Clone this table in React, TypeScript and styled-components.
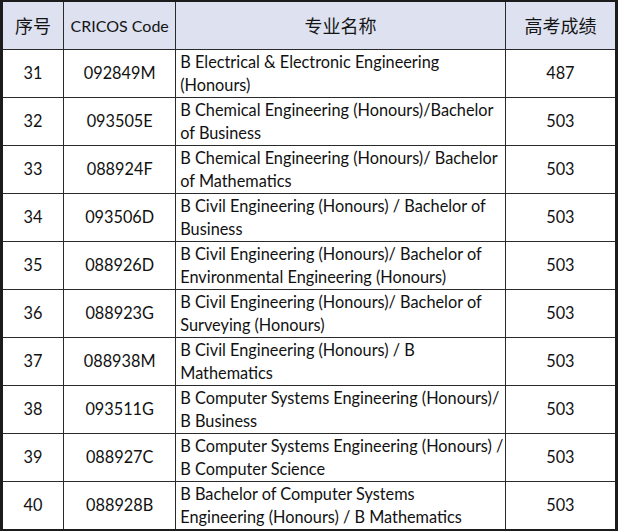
import React from 'react';
import styled, { createGlobalStyle } from 'styled-components';

type Row = {
  no: number;
  code: string;
  name: [string, string];
  score: number;
};

const rows: Row[] = [
  { no: 31, code: '092849M', name: ['B Electrical & Electronic Engineering', '(Honours)'], score: 487 },
  { no: 32, code: '093505E', name: ['B Chemical Engineering (Honours)/Bachelor', 'of Business'], score: 503 },
  { no: 33, code: '088924F', name: ['B Chemical Engineering (Honours)/ Bachelor', 'of Mathematics'], score: 503 },
  { no: 34, code: '093506D', name: ['B Civil Engineering (Honours) / Bachelor of', 'Business'], score: 503 },
  { no: 35, code: '088926D', name: ['B Civil Engineering (Honours)/ Bachelor of', 'Environmental Engineering (Honours)'], score: 503 },
  { no: 36, code: '088923G', name: ['B Civil Engineering (Honours)/ Bachelor of', 'Surveying (Honours)'], score: 503 },
  { no: 37, code: '088938M', name: ['B Civil Engineering (Honours) / B', 'Mathematics'], score: 503 },
  { no: 38, code: '093511G', name: ['B Computer Systems Engineering (Honours)/', 'B Business'], score: 503 },
  { no: 39, code: '088927C', name: ['B Computer Systems Engineering (Honours) /', 'B Computer Science'], score: 503 },
  { no: 40, code: '088928B', name: ['B Bachelor of Computer Systems', 'Engineering (Honours) / B Mathematics'], score: 503 },
];

const GlobalStyle = createGlobalStyle`
  html, body {
    margin: 0;
    padding: 0;
    background: #ffffff;
  }
  body {
    font-family: Lato, "Noto Sans CJK SC", sans-serif;
    color: #111111;
  }
`;

const Table = styled.table`
  width: 618px;
  border-collapse: collapse;
  table-layout: fixed;
  border: 3px solid #1c1c1c;
  border-top-width: 2px;
`;

const Col = styled.col<{ $w: number }>`
  width: ${({ $w }) => $w}px;
`;

const HeadRow = styled.tr`
  height: 48px;
  background: #dde1f0;
`;

const BodyRow = styled.tr`
  height: 48px;
`;

const Th = styled.th<{ $latin?: boolean }>`
  padding: 0;
  border: 1px solid #2a2a2a;
  font-size: ${({ $latin }) => ($latin ? '16px' : '18px')};
  font-weight: 400;
  text-align: center;
  vertical-align: middle;
  color: #151515;
  font-family: Lato, "Noto Sans CJK SC", sans-serif;
`;

const Td = styled.td<{ $left?: boolean }>`
  padding: ${({ $left }) => ($left ? '0 4px' : '0')};
  border: 1px solid #2a2a2a;
  font-size: 16.3px;
  line-height: 23.5px;
  text-align: ${({ $left }) => ($left ? 'left' : 'center')};
  vertical-align: middle;
  white-space: nowrap;
  overflow: hidden;
`;

const Line = styled.div`
  line-height: 23.5px;
`;

const App: React.FC = () => {
  return (
    <>
      <GlobalStyle />
      <Table>
        <colgroup>
          <Col $w={62} />
          <Col $w={112} />
          <Col $w={329} />
          <Col $w={111} />
        </colgroup>
        <thead>
          <HeadRow>
            <Th>序号</Th>
            <Th $latin>CRICOS Code</Th>
            <Th>专业名称</Th>
            <Th>高考成绩</Th>
          </HeadRow>
        </thead>
        <tbody>
          {rows.map((row) => (
            <BodyRow key={row.no}>
              <Td>{row.no}</Td>
              <Td>{row.code}</Td>
              <Td $left>
                <Line>{row.name[0]}</Line>
                <Line>{row.name[1]}</Line>
              </Td>
              <Td>{row.score}</Td>
            </BodyRow>
          ))}
        </tbody>
      </Table>
    </>
  );
};

export default App;
